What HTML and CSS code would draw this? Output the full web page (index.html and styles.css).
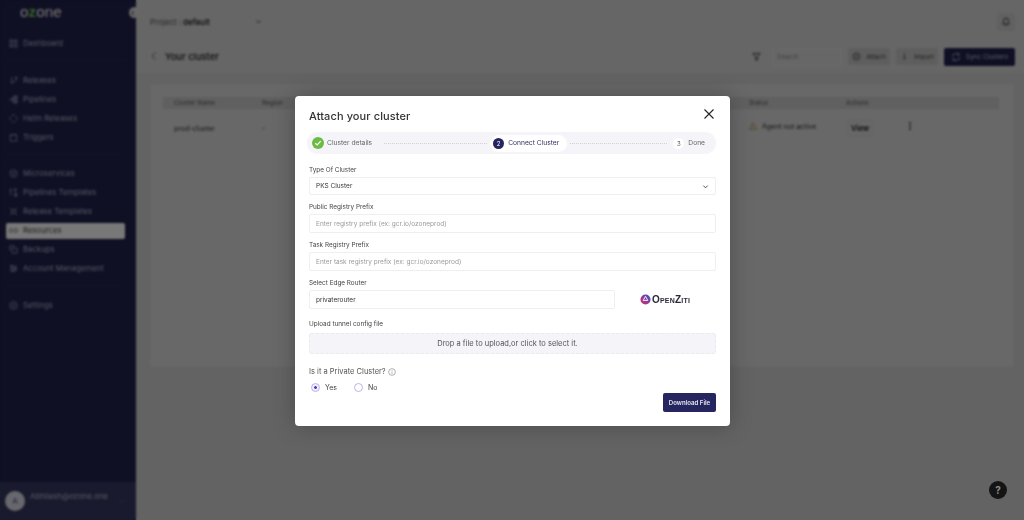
FILE: index.html
```html
<!DOCTYPE html>
<html lang="en">
<head>
<meta charset="utf-8">
<title>Your cluster</title>
<link rel="stylesheet" href="styles.css">
</head>
<body>
<div class="app">
  <aside class="sidebar">
    <div class="logo">o<span class="logo-z">z</span>one</div>
    <button class="collapse" aria-label="Collapse"><svg viewBox="0 0 8 8" width="6" height="6"><path d="M5 1 2.500 4 5 7" fill="none" stroke="#222" stroke-width="1.200"/></svg></button>
    <nav class="nav">
      <div class="nav-group">
        <a class="nav-item"><svg class="ico" viewBox="0 0 10 10"><path d="M1 1h3v3H1zM6 1h3v3H6zM1 6h3v3H1zM6 6h3v3H6z"/></svg>Dashboard</a>
      </div>
      <div class="nav-group tight">
        <a class="nav-item"><svg class="ico" viewBox="0 0 10 10"><path d="M3 1v8M3 7c3 0 5-1 5-4"/><circle cx="8" cy="2" r="1"/></svg>Releases</a>
        <a class="nav-item"><svg class="ico" viewBox="0 0 10 10"><path d="M0 5h4M4 2v6M4 2h2M4 5h2M4 8h2M6 1h3v2H6zM6 4h3v2H6zM6 7h3v2H6z"/></svg>Pipelines</a>
        <a class="nav-item"><svg class="ico" viewBox="0 0 10 10"><circle cx="5" cy="5" r="3.600" stroke-dasharray="1.400 1"/><path d="M5 0v1M5 9v1M0 5h1M9 5h1"/></svg>Helm Releases</a>
        <a class="nav-item"><svg class="ico" viewBox="0 0 10 10"><path d="M1.500 2h7v7h-7zM3 1v2M7 1v2"/></svg>Triggers</a>
      </div>
      <div class="nav-group">
        <a class="nav-item"><svg class="ico" viewBox="0 0 10 10"><circle cx="5" cy="5" r="4"/><path d="M2.500 3.500 5 5l2.500-1.500M5 5v3"/></svg>Microservices</a>
        <a class="nav-item"><svg class="ico" viewBox="0 0 10 10"><path d="M2 1v7M1 2.500 2 1l1 1.500M7 2v5M6 1h2v1H6zM6 7h3v2H6z"/></svg>Pipelines Templates</a>
        <a class="nav-item"><svg class="ico" viewBox="0 0 10 10"><path d="M3 3h4v4H3zM3 3 1 1M7 3l2-2M3 7 1 9M7 7l2 2"/></svg>Release Templates</a>
        <a class="nav-item active"><svg class="ico" viewBox="0 0 10 10"><path d="M4 3H2.500a2 2 0 0 0 0 4H4M6 3h1.500a2 2 0 0 1 0 4H6M3 5h4"/></svg>Resources</a>
        <a class="nav-item"><svg class="ico" viewBox="0 0 10 10"><path d="M3.500 3.500h5.500v5.500H3.500zM1 6.500V1h5.500"/></svg>Backups</a>
        <a class="nav-item"><svg class="ico" viewBox="0 0 10 10"><path d="M1 2.500h8M1 5h8M1 7.500h8"/><circle cx="3" cy="2.500" r="1"/><circle cx="7" cy="5" r="1"/><circle cx="4" cy="7.500" r="1"/></svg>Account Management</a>
      </div>
      <div class="nav-group last">
        <a class="nav-item"><svg class="ico" viewBox="0 0 10 10"><circle cx="5" cy="5" r="4.200"/><circle cx="5" cy="5" r="1.600"/></svg>Settings</a>
      </div>
    </nav>
    <div class="user">
      <span class="avatar">A</span>
      <span class="email">Abhilash@ozone.one</span>
      <span class="more">...</span>
    </div>
  </aside>

  <main class="main">
    <header class="topbar">
      <div class="project"><span class="project-label">Project :</span><span class="project-name">default</span>
        <svg class="chev" viewBox="0 0 8 8"><path d="M1.500 3 4 5.500 6.500 3"/></svg></div>
      <span class="bell"><svg viewBox="0 0 12 12" width="10" height="11"><path d="M2 9c1-1 1-2 1-4a3 3 0 0 1 6 0c0 2 0 3 1 4zM5 10.500h2" fill="none" stroke="#1a1a1a" stroke-width="1"/></svg></span>
    </header>
    <section class="titlebar">
      <svg class="back" viewBox="0 0 8 12"><path d="M6 1 1.500 6 6 11"/></svg>
      <h1 class="page-title">Your cluster</h1>
      <div class="tools">
        <svg class="filter" viewBox="0 0 10 10"><path d="M1 1h8L6 5v3.500L4 8V5z"/></svg>
        <span class="search">Search</span>
        <span class="tool"><svg viewBox="0 0 10 10" width="9" height="9"><circle cx="5" cy="5" r="4"/><circle cx="5" cy="5" r="2"/></svg>Attach</span>
        <span class="tool"><svg viewBox="0 0 10 10" width="9" height="9"><path d="M5 1v7M3 6l2 2 2-2"/></svg>Import</span>
        <span class="sync"><svg viewBox="0 0 10 10" width="10" height="10"><path d="M1.500 5A3.500 3.500 0 0 1 8 3M8.500 5A3.500 3.500 0 0 1 2 7M8 1v2H6M2 9V7h2"/></svg>Sync Clusters</span>
      </div>
    </section>
    <section class="card">
      <div class="thead">
        <span>Cluster Name</span><span>Region</span><span></span><span>Status</span><span>Actions</span>
      </div>
      <div class="trow">
        <span>prod-cluster</span><span>-</span><span></span>
        <span class="status"><svg viewBox="0 0 10 10" width="8" height="8"><path d="M5 1 9.500 9H.5zM5 4v2.500M5 7.300v.6"/></svg>Agent not active</span>
        <span class="actions"><span class="view">View</span><span class="kebab"><i></i><i></i><i></i></span></span>
      </div>
    </section>
  </main>
</div>

<div class="overlay"></div>
<button class="help">?</button>

<div class="modal">
  <div class="modal-head">
    <h2 class="modal-title">Attach your cluster</h2>
    <svg class="close" viewBox="0 0 12 12"><path d="M1.500 1.500l9 9M10.500 1.500l-9 9"/></svg>
  </div>
  <div class="stepper">
    <div class="step"><svg class="check" viewBox="0 0 12 12"><circle cx="6" cy="6" r="6" fill="#6cbb45"/><path d="M3.300 6.200 5.200 8l3.500-3.800" fill="none" stroke="#fff" stroke-width="1.200"/></svg>Cluster details</div>
    <span class="line line-first"></span>
    <div class="step current"><span class="num">2</span>Connect Cluster</div>
    <span class="line line-second"></span>
    <div class="step done"><span class="num idle">3</span>Done</div>
  </div>
  <form class="form">
    <div class="field first">
      <label class="label">Type Of Cluster</label>
      <div class="control select">PKS Cluster<svg class="chev" viewBox="0 0 8 8"><path d="M1.500 3 4 5.500 6.500 3"/></svg></div>
    </div>
    <div class="field">
      <label class="label">Public Registry Prefix</label>
      <div class="control tall placeholder">Enter registry prefix (ex: gcr.io/ozoneprod)</div>
    </div>
    <div class="field">
      <label class="label">Task Registry Prefix</label>
      <div class="control tall placeholder">Enter task registry prefix (ex: gcr.io/ozoneprod)</div>
    </div>
    <div class="field">
      <label class="label">Select Edge Router</label>
      <div class="router-row">
        <div class="control router">privaterouter</div>
        <div class="ziti"><svg viewBox="0 0 12 12" width="11" height="11"><defs><linearGradient id="zg" x1="0" y1="1" x2="1" y2="0"><stop offset="0" stop-color="#e8255f"/><stop offset="1" stop-color="#2b55d8"/></linearGradient></defs><circle cx="6" cy="6" r="5.500" fill="url(#zg)"/><path d="M6 2.500 8.500 7H3.500z" fill="none" stroke="#fff" stroke-width="1"/></svg><span class="ziti-text">OpenZiti</span></div>
      </div>
    </div>
    <div class="field upload">
      <label class="label">Upload tunnel config file</label>
      <div class="drop">Drop a file to upload,or click to select it.</div>
    </div>
    <div class="private">Is it a Private Cluster?<svg viewBox="0 0 10 10" width="8" height="8"><circle cx="5" cy="5" r="4.200"/><path d="M5 4.500v3M5 2.500v1"/></svg></div>
    <div class="bottom">
      <div class="radios">
        <span class="radio on">Yes</span>
        <span class="radio">No</span>
      </div>
      <span class="download">Download File</span>
    </div>
  </form>
</div>
</body>
</html>
```

FILE: styles.css
```css
* { box-sizing: border-box; }
html, body { margin: 0; height: 100%; overflow: hidden; }
body { font-family: Inter, "Noto Sans", "Liberation Sans", sans-serif; background: #c6c6c6; color: #222; }
svg { display: block; flex: none; }
h1, h2 { margin: 0; font-weight: 500; }

.app { display: flex; height: 520px; }

.sidebar { position: relative; width: 136px; flex: none; background: #1e2048; color: #a9abc0; display: flex; flex-direction: column; }
.logo { font-family: "Liberation Sans", sans-serif; font-size: 15px; line-height: 14px; letter-spacing: .2px; padding: 5px 0 0 20px; height: 33px; color: #e4e4e4; }
.logo-z { color: #6cc04a; font-weight: 700; }
.collapse { position: absolute; top: 7px; right: -4px; width: 11px; height: 11px; padding: 0 0 0 1px; border: 0; border-radius: 50%; background: #d0d0d0; display: flex; align-items: center; }
.nav { flex: 1; padding: 0 11px 0 6px; }
.nav-group { border-bottom: 1px solid #282a58; padding: 1px 0 7px; margin-bottom: 9px; }
.nav-group.tight { margin-bottom: 8px; }
.nav-group.last { border: 0; }
.nav-item { display: flex; align-items: center; gap: 5px; height: 19px; padding: 0 2px 0 3px; font-size: 7.600px; letter-spacing: .1px; border-radius: 2px; }
.nav-item.active { height: 16px; margin: 1.500px 0; background: #f0f0f0; color: #444; }
.ico { width: 9px; height: 9px; fill: none; stroke: currentColor; stroke-width: .8; }
.user { height: 38px; background: #32345a; display: flex; align-items: center; padding: 0 10px 0 5px; font-size: 7.800px; }
.avatar { width: 20px; height: 20px; border-radius: 50%; background: #d0d0d8; color: #3a3a9a; display: grid; place-items: center; font-size: 8px; }
.email { margin: -10px 0 0 5px; flex: 1; }
.more { letter-spacing: .5px; margin-top: -4px; color: #7a7a8a; font-size: 7px; }

.main { flex: 1; min-width: 0; display: flex; flex-direction: column; }
.topbar { height: 40px; flex: none; background: #cccccc; display: flex; align-items: center; justify-content: space-between; padding: 3px 9px 0 14px; }
.project { display: flex; align-items: center; font-size: 8px; }
.project-label { width: 33px; color: #555; }
.project-name { width: 72px; font-weight: 500; color: #111; }
.chev { width: 7px; height: 7px; fill: none; stroke: #333; stroke-width: 1; }
.bell { width: 18px; height: 18px; display: grid; place-items: center; background: #c2c2c2; border-radius: 3px; }
.titlebar { height: 33px; flex: none; background: #cccccc; display: flex; align-items: center; padding: 0 9px 0 15px; }
.back { width: 6px; height: 10px; fill: none; stroke: #444; stroke-width: 1; margin: -2px 8px 0 0; }
.page-title { font-size: 9.400px; font-weight: 500; color: #222; }
.tools { margin-left: auto; display: flex; align-items: center; gap: 6px; font-size: 6.500px; color: #444; }
.filter { width: 9px; height: 10px; fill: none; stroke: #222; stroke-width: .9; margin-right: 5px; }
.search { width: 70px; height: 18px; border: 1px solid #d6d6d6; border-radius: 2px; background: #cecece; padding: 0 4px; display: flex; align-items: center; color: #888; }
.tool { width: 42px; height: 17px; border-radius: 2px; background: #bdbdbd; display: flex; align-items: center; justify-content: center; gap: 5px; }
.tool svg, .sync svg, .status svg { fill: none; stroke: currentColor; stroke-width: .8; }
.sync { width: 71px; height: 18px; background: #1e2048; color: #b8b8c8; border-radius: 2px; display: flex; align-items: center; justify-content: center; gap: 5px; }
.card { margin: 11px 10px 0 14px; height: 283px; background: #d0d0d0; border-radius: 4px; padding: 13px 15px 0 13px; }
.thead, .trow { display: grid; grid-template-columns: 88px 100px 387px 97px 1fr; padding-left: 11px; align-items: center; font-size: 6.400px; color: #555; }
.thead { height: 12px; background: #c0c0c0; }
.trow { height: 38px; font-size: 7px; color: #333; }
.status { display: flex; align-items: center; gap: 5px; margin-top: -4px; }
.status svg { color: #a0761a; }
.actions { display: flex; align-items: center; }
.view { width: 26px; height: 16px; margin-left: 1px; border: 1px solid #c6c6c6; display: grid; place-items: center; font-size: 7.500px; font-weight: 600; color: #222; border-radius: 2px; }
.kebab { margin: -4px 0 0 36px; display: grid; gap: 1px; }
.kebab i { width: 2px; height: 2px; background: #333; border-radius: 50%; display: block; }

.overlay { position: fixed; inset: 0; background: rgba(0, 0, 0, .5); backdrop-filter: blur(1px); }
.help { position: fixed; left: 989px; top: 481px; width: 18px; height: 18px; padding: 0; border: 0; border-radius: 50%; background: #141414; color: #8a8a8a; font: 700 10px Inter, sans-serif; }

.modal { position: fixed; left: 295px; top: 96px; width: 435px; height: 330px; background: #fff; border-radius: 4px; box-shadow: 0 0 22px rgba(0, 0, 0, .25); padding: 0 14px 0 12px; display: flex; flex-direction: column; }
.modal-head { height: 36px; flex: none; display: flex; align-items: center; justify-content: space-between; padding: 4px 1px 0 2px; }
.modal-title { font-size: 11px; font-weight: 500; letter-spacing: .1px; color: #333; }
.close { width: 12px; height: 12px; fill: none; stroke: #222; stroke-width: 1.100; margin-top: -4px; }
.stepper { height: 22px; flex: none; background: #f4f4f9; border-radius: 11px; display: flex; align-items: center; padding: 0 5px; font-size: 6.700px; color: #666; }
.step { display: flex; align-items: center; gap: 3px; height: 17px; }
.step.current { background: #fff; border-radius: 9px; padding: 0 8px 0 3px; color: #2f2f60; gap: 4px; }
.step.done { padding-right: 6px; gap: 0; }
.check { width: 12px; height: 12px; }
.num { width: 11px; height: 11px; border-radius: 50%; background: #25265f; color: #fff; display: grid; place-items: center; font-size: 6px; }
.num.idle { background: #fff; color: #555; margin-right: 4px; }
.line { height: 0; border-top: 1px dotted #cfcfd6; }
.line-first { flex: none; width: 103px; margin: 0 3px 0 12px; }
.line-second { flex: 1; margin: 0 6px 0 3px; }

.form { padding: 0 0 0 2px; flex: 1; display: flex; flex-direction: column; }
.field { display: flex; flex-direction: column; }
.label { height: 19px; padding-top: 7.500px; font-size: 6.400px; line-height: 9px; color: #444; }
.first .label { height: 23px; padding-top: 11.500px; }
.control { height: 18px; border: 1px solid #efeff1; border-radius: 2px; padding: 0 6px; display: flex; align-items: center; font-size: 6.500px; color: #333; background: #fff; }
.control.tall { height: 19px; }
.select { justify-content: space-between; }
.placeholder { color: #9a9a9a; }
.router-row { display: flex; align-items: center; }
.router { width: 306px; height: 19px; }
.ziti { margin-left: 25px; display: flex; align-items: center; gap: 1px; }
.ziti-text { font: 700 10px "Liberation Sans", sans-serif; font-variant: small-caps; color: #2a2a3a; letter-spacing: .2px; }
.upload .label { height: 24px; padding-top: 11px; }
.drop { height: 21px; border: 1px dashed #e9e9f0; border-radius: 2px; background: #f4f4f9; display: grid; place-items: center; padding-right: 10px; font-size: 7.500px; color: #555; }
.private { margin-top: 13px; display: flex; align-items: center; gap: 2px; font-size: 7.500px; color: #555; height: 9px; }
.private svg { fill: none; stroke: #777; stroke-width: .7; }
.bottom { display: flex; justify-content: space-between; margin-top: 3px; }
.radios { display: flex; gap: 17px; padding: 4px 0 0 2px; font-size: 7px; color: #444; height: 13px; }
.radio { display: flex; align-items: center; gap: 5px; height: 9px; }
.radio::before { content: ""; width: 7px; height: 7px; border: 1px solid #b9b3ea; border-radius: 50%; background: #fff; }
.radio.on::before { background: radial-gradient(circle, #4a3fc0 0 1.300px, #f0eefc 1.500px); }
.download { width: 53px; height: 19px; margin-top: 14px; background: #25265f; color: #e8e8f2; border-radius: 2px; display: grid; place-items: center; font-size: 6.100px; font-weight: 600; }
```
